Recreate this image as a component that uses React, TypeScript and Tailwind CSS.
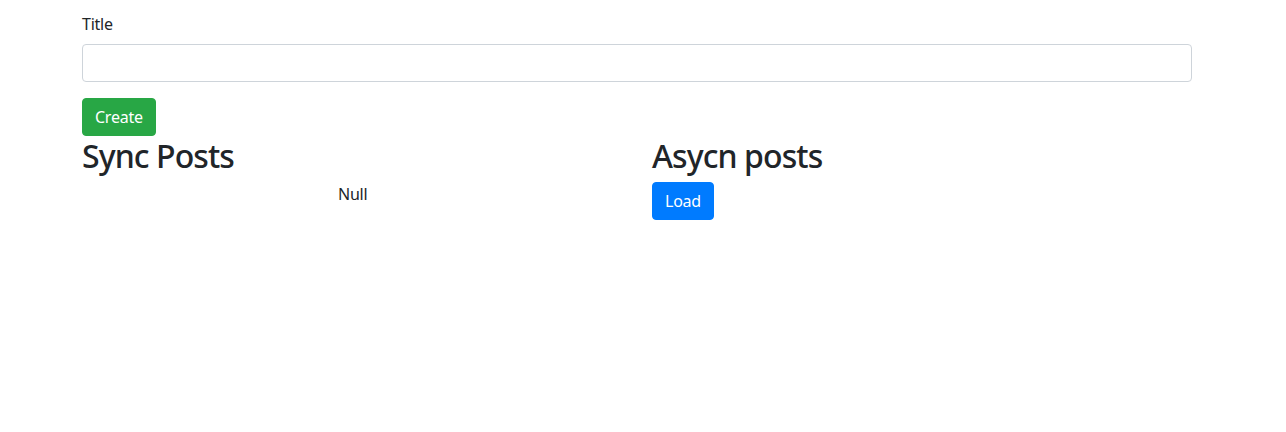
export default function App() {
  return (
    <div
      className="min-h-[432px] bg-white text-[#212529] text-[16px] leading-[24px] tracking-[-0.25px]"
      style={{ fontFamily: '"Segoe UI", "Noto Sans", "Open Sans", sans-serif' }}
    >
      <div className="w-[1110px] ml-[82px] pt-[12px]">
        <div className="mb-[16px]">
          <label className="block mb-[8px]">Title</label>
          <input
            type="text"
            className="block w-full h-[38px] px-[12px] py-[6px] border border-[#ced4da] rounded-[4px] bg-white outline-none"
          />
        </div>
        <button className="h-[38px] px-[12px] bg-[#28a745] border border-[#28a745] text-white rounded-[4px]">
          Create
        </button>
        <div className="flex gap-[30px]">
          <div className="w-[540px]">
            <h2 className="text-[32px] leading-[38.4px] font-medium mb-[7px] pt-[1px] tracking-[-0.9px]">Sync Posts</h2>
            <p className="pl-[256px]">Null</p>
          </div>
          <div className="w-[540px]">
            <h2 className="text-[32px] leading-[38.4px] font-medium mb-[7px] pt-[1px] tracking-[-0.9px]">Asycn posts</h2>
            <button className="h-[38px] px-[12px] bg-[#007bff] border border-[#007bff] text-white rounded-[4px]">
              Load
            </button>
          </div>
        </div>
      </div>
    </div>
  );
}
